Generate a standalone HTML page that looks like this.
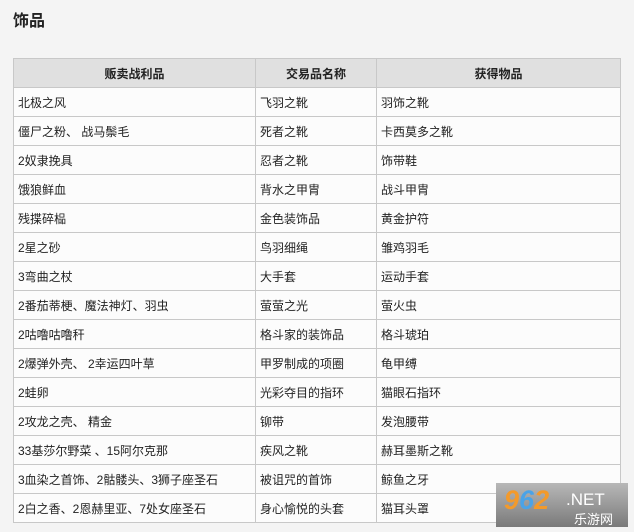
<!DOCTYPE html>
<html><head><meta charset="utf-8"><style>
body{margin:0;width:634px;height:532px;background:#f4f4f4;font-family:"Liberation Sans","Noto Sans CJK SC",sans-serif;overflow:hidden;position:relative}
h2{position:absolute;left:13px;top:7px;margin:0;font-size:16px;font-weight:bold;color:#222}
table{position:absolute;left:13px;top:58px;border-collapse:collapse;width:608px;font-size:12px;color:#222}
td,th{border:1px solid #c8c8c8;height:28px;padding:0 4px;background:#fcfcfc;font-weight:normal}
th{background:#e0e0e0;text-align:center;font-weight:bold}
.logo{position:absolute;left:496px;top:483px;width:132px;height:44px;background:linear-gradient(#b8b8b8,#7a7a7a);font-family:"Liberation Sans",sans-serif}
.logo b{position:absolute;left:8px;top:2px;font-size:27px;font-style:italic;color:#f39a2b}
.logo b span{color:#4aa3e8}
.logo i{position:absolute;left:70px;top:7px;font-size:17px;color:#fff;font-style:normal}
.logo s{position:absolute;left:78px;top:26px;font-size:13px;color:#fff;text-decoration:none;font-family:"Noto Sans CJK SC",sans-serif}
</style></head><body>
<h2>饰品</h2>
<table>
<tr><th style="width:233px">贩卖战利品</th><th style="width:112px">交易品名称</th><th>获得物品</th></tr>
<tr><td>北极之风</td><td>飞羽之靴</td><td>羽饰之靴</td></tr>
<tr><td>僵尸之粉、 战马鬃毛</td><td>死者之靴</td><td>卡西莫多之靴</td></tr>
<tr><td>2奴隶挽具</td><td>忍者之靴</td><td>饰带鞋</td></tr>
<tr><td>饿狼鲜血</td><td>背水之甲胄</td><td>战斗甲胄</td></tr>
<tr><td>残揲碎榀</td><td>金色装饰品</td><td>黄金护符</td></tr>
<tr><td>2星之砂</td><td>鸟羽细绳</td><td>雏鸡羽毛</td></tr>
<tr><td>3弯曲之杖</td><td>大手套</td><td>运动手套</td></tr>
<tr><td>2番茄蒂梗、魔法神灯、羽虫</td><td>萤萤之光</td><td>萤火虫</td></tr>
<tr><td>2咕噜咕噜秆</td><td>格斗家的装饰品</td><td>格斗琥珀</td></tr>
<tr><td>2爆弹外壳、 2幸运四叶草</td><td>甲罗制成的项圈</td><td>龟甲缚</td></tr>
<tr><td>2蛙卵</td><td>光彩夺目的指环</td><td>猫眼石指环</td></tr>
<tr><td>2攻龙之壳、 精金</td><td>铆带</td><td>发泡腰带</td></tr>
<tr><td>33基莎尔野菜 、15阿尔克那</td><td>疾风之靴</td><td>赫耳墨斯之靴</td></tr>
<tr><td>3血染之首饰、2骷髅头、3狮子座圣石</td><td>被诅咒的首饰</td><td>鲸鱼之牙</td></tr>
<tr><td>2白之香、2恩赫里亚、7处女座圣石</td><td>身心愉悦的头套</td><td>猫耳头罩</td></tr>
</table>
<div class="logo"><b>9<span>6</span>2</b><i>.NET</i><s>乐游网</s></div>
</body></html>
